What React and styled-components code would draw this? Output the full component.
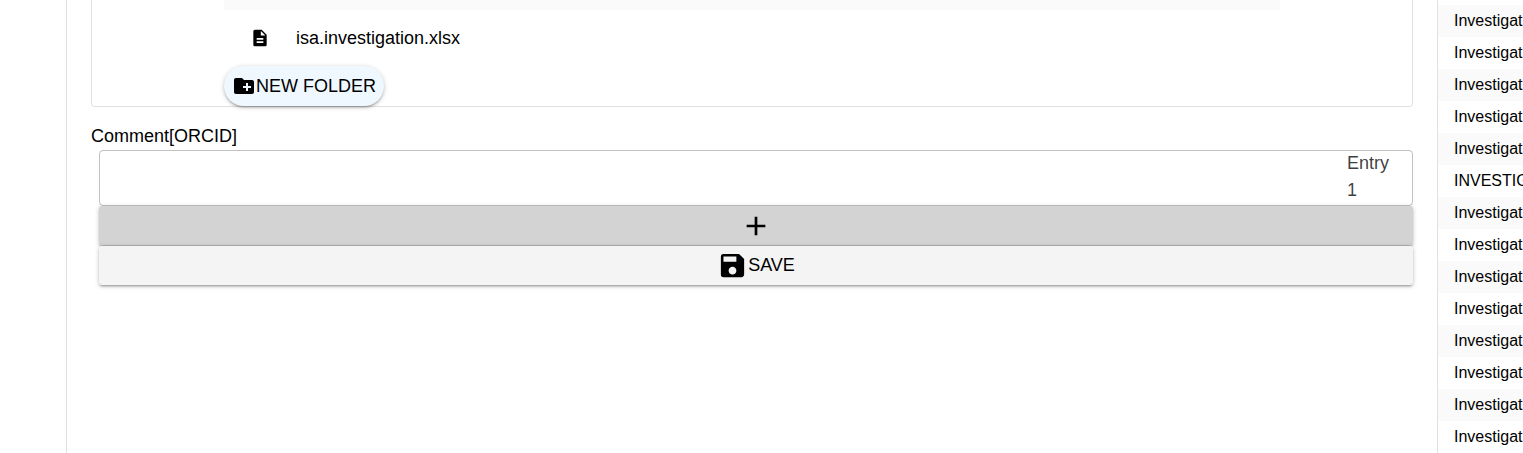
import React from "react";
import styled, { createGlobalStyle } from "styled-components";
import { MdAdd, MdCreateNewFolder, MdDescription, MdSave } from "react-icons/md";

const GlobalStyle = createGlobalStyle`
  *, *::before, *::after { box-sizing: border-box; }
  body {
    margin: 0;
    overflow: hidden;
    background: #fff;
    color: #000;
    font-family: "Liberation Sans", Arial, sans-serif;
    font-size: 18px;
  }
`;

const Page = styled.div`
  display: flex;
  height: 453px;
  overflow: hidden;
`;

const Gutter = styled.div`
  flex: 0 0 66px;
`;

const Main = styled.main`
  flex: 1 1 auto;
  padding: 0 24px;
  border-left: 1px solid rgba(0, 0, 0, 0.12);
`;

const FilePanel = styled.section`
  height: 107px;
  padding: 0 132px;
  border: 1px solid rgba(0, 0, 0, 0.12);
  border-top: 0;
  border-radius: 0 0 4px 4px;
`;

const StripedRow = styled.div`
  height: 10px;
  background: #fafafa;
`;

const FileRow = styled.div`
  display: flex;
  align-items: center;
  height: 56px;
  padding-left: 26px;
  gap: 26px;

  svg { width: 20px; height: 20px; }
`;

const Button = styled.button`
  display: flex;
  align-items: center;
  justify-content: center;
  position: relative;
  width: ${({ $round }) => ($round ? "160px" : "100%")};
  height: ${({ $round }) => ($round ? "40px" : "39px")};
  padding: 0;
  border: 0;
  border-radius: ${({ $round }) => ($round ? "28px" : "3px")};
  background: ${({ $fill }) => $fill};
  color: #000;
  font: inherit;
  line-height: 30px;
  white-space: nowrap;
  box-shadow: 0 1px 5px rgba(0, 0, 0, 0.2), 0 2px 2px rgba(0, 0, 0, 0.14),
    0 3px 1px -2px rgba(0, 0, 0, 0.12);

  svg {
    flex: none;
    width: ${({ $icon }) => $icon}px;
    height: ${({ $icon }) => $icon}px;
  }
`;

const ButtonText = styled.span`
  padding-bottom: 2px;
`;

const Label = styled.div`
  height: 43px;
  padding-top: 16px;
  line-height: 27px;
`;

const Form = styled.form`
  padding-left: 8px;
`;

const Field = styled.div`
  display: flex;
  justify-content: flex-end;
  height: 56px;
  border: 1px solid rgba(0, 0, 0, 0.24);
  border-radius: 4px;
`;

const Actions = styled.div`
  display: flex;
  flex-direction: column;
  gap: 1px;
  width: 1314px;
`;

const Suffix = styled.div`
  width: 65px;
  padding-right: 12px;
  color: rgba(0, 0, 0, 0.77);
  line-height: 27px;
  margin-top: -1px;
`;

const Sidebar = styled.aside`
  flex: 0 0 86px;
  overflow: hidden;
  padding-top: 5px;
  border-left: 1px solid rgba(0, 0, 0, 0.12);
`;

const Item = styled.div`
  height: 32px;
  padding-left: 16px;
  font-size: 16px;
  line-height: 31px;
  white-space: nowrap;

  &:nth-child(odd) { background: #fafafa; }
`;

const items = Array.from({ length: 14 }, (_, i) => (i === 5 ? "INVESTIGATION" : "Investigation"));

export default function App() {
  return (
    <>
      <GlobalStyle />
      <Page>
        <Gutter />
        <Main>
          <FilePanel>
            <StripedRow />
            <FileRow>
              <MdDescription />
              <span>isa.investigation.xlsx</span>
            </FileRow>
            <Button type="button" $round $fill="aliceblue" $icon={24}>
              <MdCreateNewFolder />
              NEW FOLDER
            </Button>
          </FilePanel>
          <Label>Comment[ORCID]</Label>
          <Form>
            <Field>
              <Suffix>Entry 1</Suffix>
            </Field>
            <Actions>
              <Button type="button" $fill="lightgray" $icon={32}>
                <MdAdd />
              </Button>
              <Button type="button" $fill="#f4f4f4" $icon={31}>
                <MdSave />
                <ButtonText>SAVE</ButtonText>
              </Button>
            </Actions>
          </Form>
        </Main>
        <Sidebar>
          {items.map((text, i) => (
            <Item key={i}>{text}</Item>
          ))}
        </Sidebar>
      </Page>
    </>
  );
}
